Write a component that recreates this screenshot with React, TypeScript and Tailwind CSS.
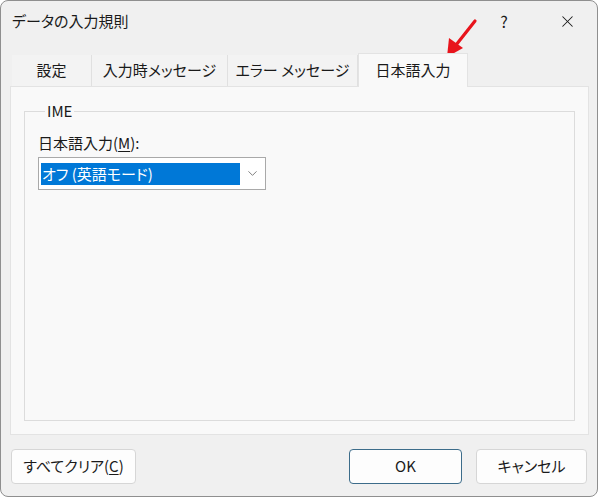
import { X, ChevronDown } from 'lucide-react'

const font = { fontFamily: '"Noto Sans CJK JP", "Noto Sans", sans-serif' }

function Tab({ label, width, active }: { label: string; width: string; active?: boolean }) {
  if (active) {
    return (
      <div
        className={`${width} h-[34px] -mb-px flex items-center justify-center bg-[#f9f9f9] border border-b-0 border-[#e3e3e3] text-[15px] text-[#1a1a1a] relative z-10`}
      >
        {label}
      </div>
    )
  }
  return (
    <div
      className={`${width} h-[31px] flex items-center justify-center border-r border-[#e0e0e0] text-[15px] text-[#1a1a1a] bg-[#f3f3f3]`}
    >
      {label}
    </div>
  )
}

export default function App() {
  return (
    <div className="w-[600px] h-[498px] bg-white [font-feature-settings:'palt']" style={font}>
      <div className="relative w-[598px] h-[497px] border border-[#8f8f8f] rounded-[8px] bg-[#f0f0f0] flex flex-col overflow-hidden">
        {/* タイトルバー */}
        <div className="h-[40px] flex items-center pl-[11px] text-[15px] text-[#1a1a1a]">
          <span className="flex-1">データの入力規則</span>
          <span className="w-[20px] text-center text-[16px] mr-[44px]">?</span>
          <X className="w-[19px] h-[19px] mr-[20px]" strokeWidth={1.3} />
        </div>

        {/* タブ */}
        <div className="mt-[12px] ml-[11px] flex items-end">
          <Tab label="設定" width="w-[80px]" />
          <Tab label="入力時メッセージ" width="w-[136px]" />
          <Tab label="エラー メッセージ" width="w-[130px]" />
          <Tab label="日本語入力" width="w-[110px]" active />
        </div>

        {/* パネル */}
        <div className="ml-[9px] w-[579px] h-[349px] border border-[#e3e3e3] bg-[#f9f9f9] px-[13px] pt-[14px]">
          <fieldset className="h-[320px] border border-[#dcdcdc] px-[13px]">
            <legend className="ml-[7px] px-[2px] text-[15px] leading-[20px] text-[#1a1a1a]">IME</legend>
            <div className="mt-[12px] text-[15px] leading-[20px] text-[#1a1a1a]">
              日本語入力(<span className="underline underline-offset-2">M</span>):
            </div>
            <div className="mt-[4px] w-[228px] h-[33px] border border-[#a9a9a9] bg-white flex items-center pl-[2px]">
              <div className="w-[199px] h-[22px] bg-[#0078d7] text-white text-[15px] leading-[22px] pl-[1px]">
                オフ (英語モード)
              </div>
              <div className="flex-1 flex items-center justify-center">
                <ChevronDown className="w-[15px] h-[15px] text-[#555]" strokeWidth={1.2} />
              </div>
            </div>
          </fieldset>
        </div>

        {/* ボタン */}
        <div className="mt-[14px] flex items-center px-[10px]">
          <button className="w-[125px] h-[35px] border border-[#d6d6d6] rounded-[4px] bg-[#fdfdfd] text-[15px] text-[#1a1a1a]">
            すべてクリア(<span className="underline underline-offset-2">C</span>)
          </button>
          <div className="flex-1" />
          <button className="w-[113px] h-[35px] border border-[#3c6c8a] rounded-[4px] bg-[#fdfdfd] text-[15px] text-[#1a1a1a] mr-[14px]">
            OK
          </button>
          <button className="w-[111px] h-[35px] border border-[#d6d6d6] rounded-[4px] bg-[#fdfdfd] text-[15px] text-[#1a1a1a]">
            キャンセル
          </button>
        </div>

        {/* 赤い矢印 */}
        <svg className="absolute left-[440px] top-[16px]" width="40" height="44" viewBox="0 0 40 44">
          <line x1="34" y1="4" x2="15" y2="28" stroke="#e8141c" strokeWidth="3.2" strokeLinecap="round" />
          <polygon points="6,40 8,21 22,31" fill="#e8141c" />
        </svg>
      </div>
    </div>
  )
}
